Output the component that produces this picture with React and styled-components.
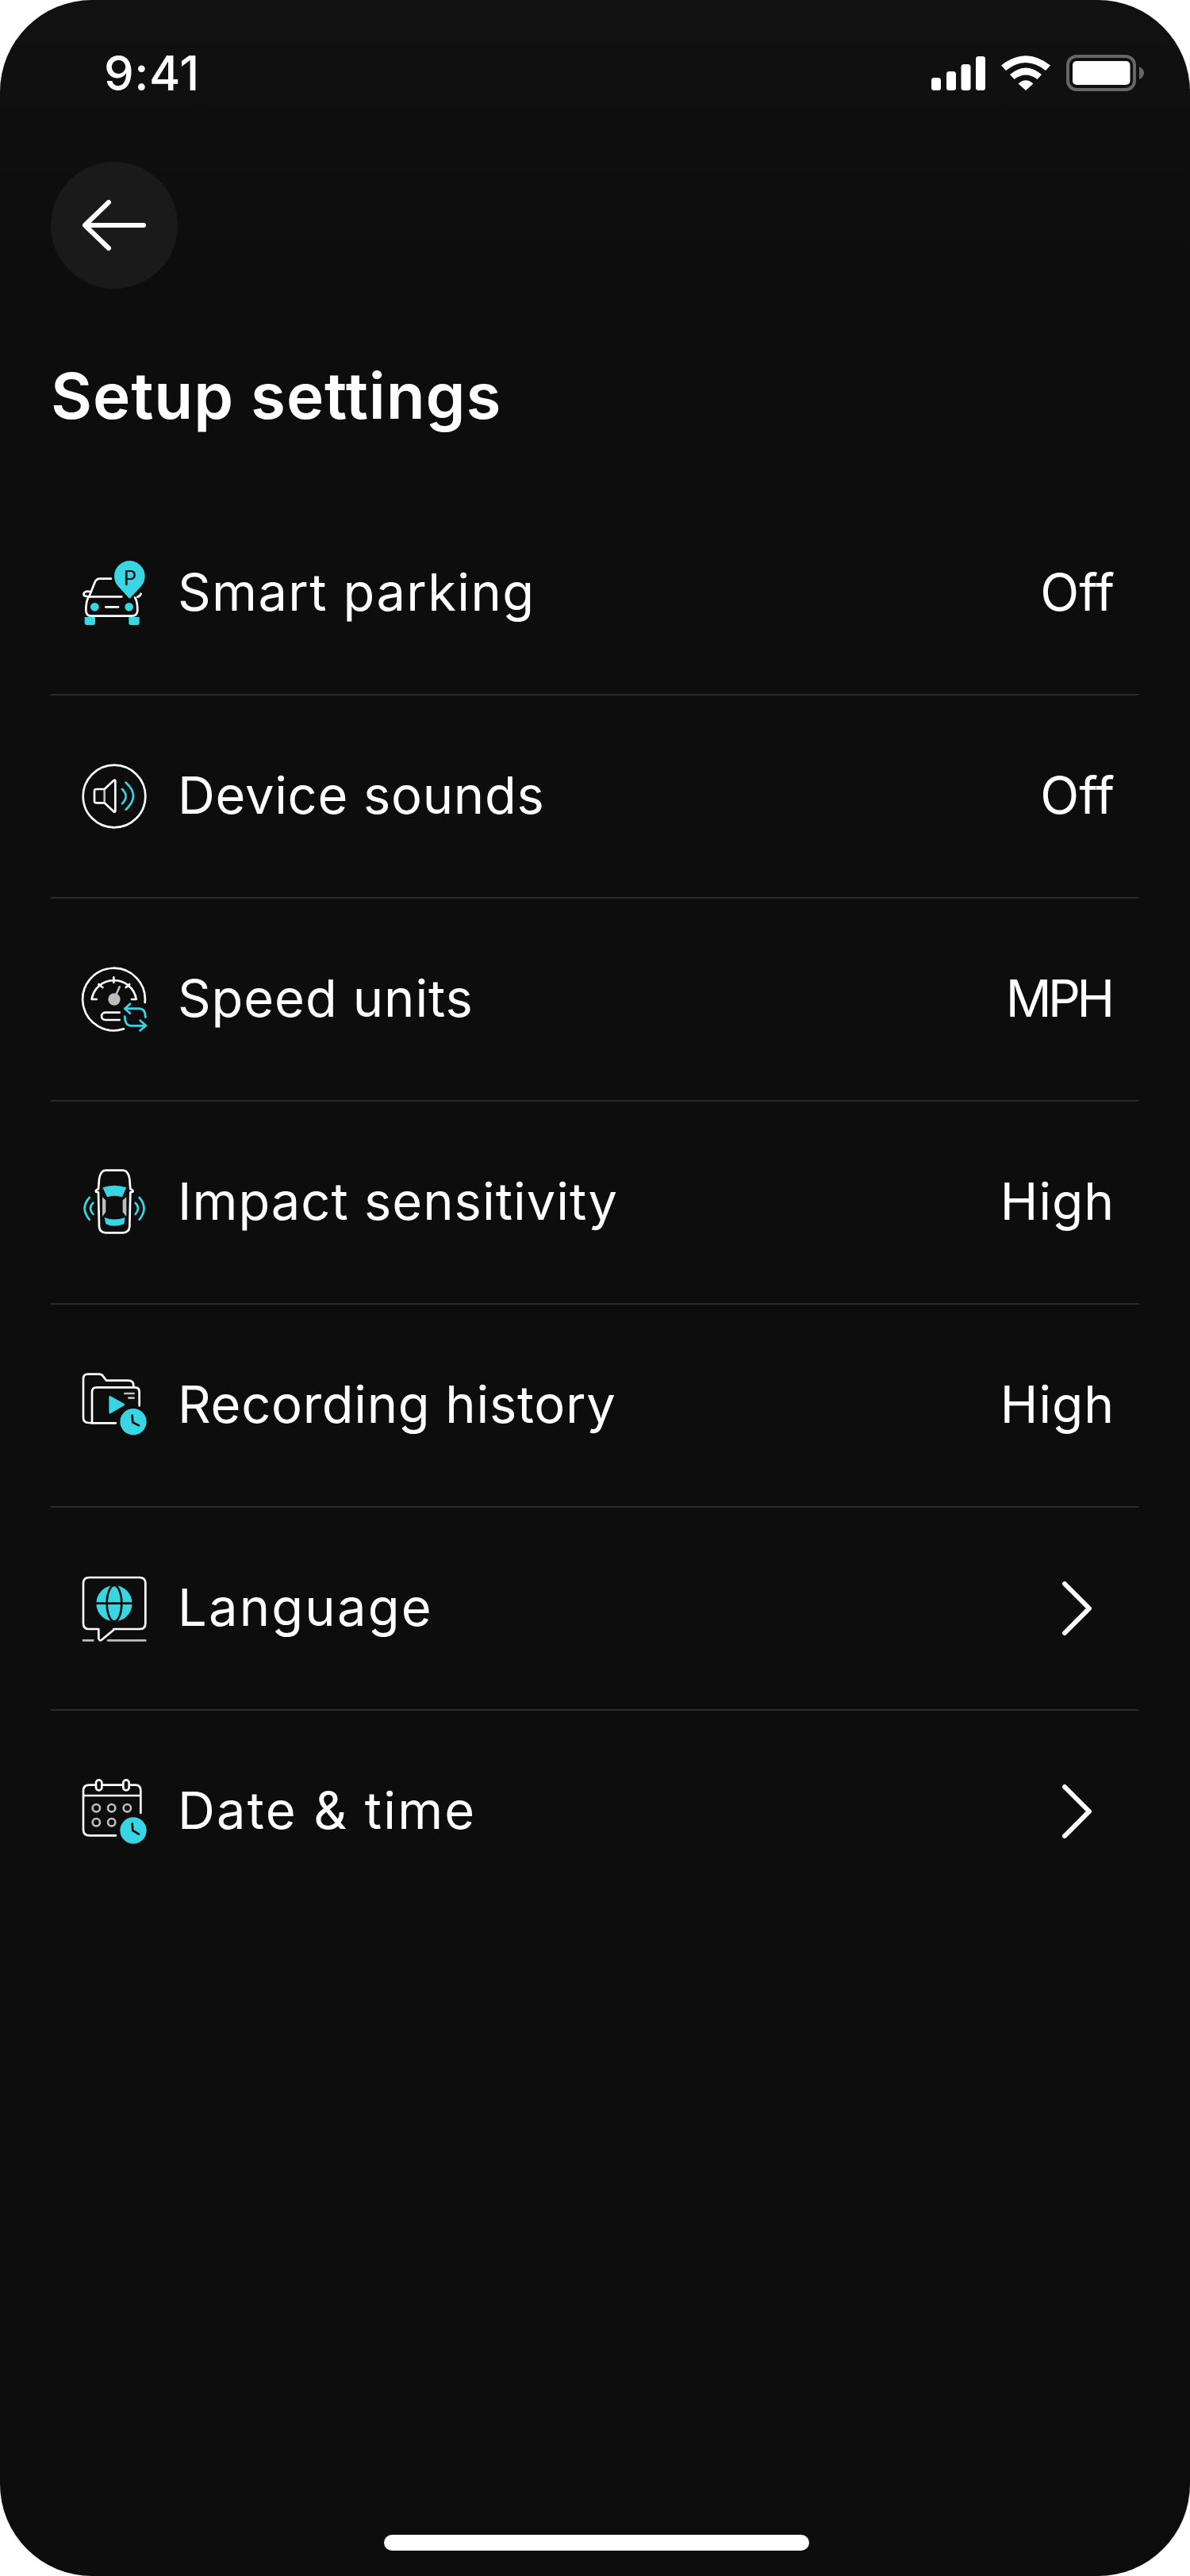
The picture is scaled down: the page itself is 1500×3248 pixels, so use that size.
import styled, { createGlobalStyle } from "styled-components";

const CYAN = "#38d6e2";
const DARK = "#0d0d0d";
const GREY = "#bdbdbd";

const GlobalStyle = createGlobalStyle`
  html, body {
    margin: 0;
    padding: 0;
    background: #fff;
  }
`;

const Screen = styled.div`
  width: 1500px;
  height: 3248px;
  display: flex;
  flex-direction: column;
  overflow: hidden;
  border-radius: 116px;
  background: linear-gradient(#111111 0, #0d0d0d 380px);
  color: #fff;
  font-family: "Inter", "Liberation Sans", sans-serif;
`;

const StatusBar = styled.div`
  height: 184px;
  display: flex;
  align-items: center;
  justify-content: space-between;
  padding: 0 58px 0 131px;
`;

const Clock = styled.span`
  font-size: 60px;
  font-weight: 500;
  letter-spacing: 0.5px;
`;

const StatusIcons = styled.div`
  display: flex;
  align-items: center;
  gap: 20px;
`;

const BackButton = styled.button`
  width: 160px;
  height: 160px;
  margin: 20px 0 0 64px;
  padding: 0;
  border: 0;
  border-radius: 50%;
  display: flex;
  align-items: center;
  justify-content: center;
  background: #1a1a1a;
`;

const Title = styled.h1`
  margin: 80px 0 0 64px;
  font-size: 80px;
  line-height: 110px;
  font-weight: 600;
  letter-spacing: 0.9px;
`;

const List = styled.div`
  margin: 67px 64px 0;
`;

const Row = styled.div`
  height: 256px;
  box-sizing: border-box;
  display: flex;
  align-items: center;
  padding: 0 31px 0 16px;
  border-bottom: 2px solid ${(p) => (p.$last ? "transparent" : "#2a2a2a")};
`;

const RowIcon = styled.svg`
  width: 130px;
  height: 110px;
  flex: none;
  margin-right: 14px;
`;

const Label = styled.span`
  flex: 1;
  padding-bottom: 4px;
  font-size: 65px;
  font-weight: 400;
  letter-spacing: ${(p) => p.$track}px;
`;

// negative tracking pulls the last glyph past the box, so pad it back in
const Value = styled.span`
  padding: 0 ${(p) => Math.max(0, -p.$track)}px 4px 0;
  font-size: 64px;
  font-weight: 400;
  letter-spacing: ${(p) => p.$track}px;
`;

const Chevron = styled.svg`
  width: 40px;
  height: 72px;
  margin-right: 27px;
`;

const HomeBar = styled.div`
  width: 536px;
  height: 20px;
  margin: auto auto 32px 484px;
  border-radius: 10px;
  background: #fff;
`;

const white = { fill: "none", stroke: "#fff", strokeWidth: 8, strokeLinecap: "round", strokeLinejoin: "round" };
const cyan = { ...white, stroke: CYAN };
const grey = { ...white, stroke: GREY };
const ink = { ...white, stroke: DARK };

const ParkingIcon = () => (
  <RowIcon viewBox="0 9 390 330">
    <path fill={CYAN} d="M250 195 L206 147 A58 58 0 1 1 294 147 Z" />
    <text x="228" y="143" fontSize="76" fontFamily="Inter" fill={DARK}>P</text>
    <path {...white} d="M180 119 H138 Q124 119 118 134 L97 187 M220 187 H95 Q85 205 85 238 Q85 260 105 260 H258 Q280 260 280 238 Q280 205 270 190 M97 186 Q78 188 76 178 Q78 164 100 168 M280 188 Q290 186 293 176" />
    <circle cx="118" cy="226" r="16" fill={CYAN} />
    <circle cx="248" cy="226" r="16" fill={CYAN} />
    <path {...white} d="M160 226 H207" />
    <path fill={CYAN} d="M80 264 H120 V285 Q120 295 110 295 H90 Q80 295 80 285 Z M247 264 H287 V285 Q287 295 277 295 H257 Q247 295 247 285 Z" />
  </RowIcon>
);

const SoundIcon = () => (
  <RowIcon viewBox="0 -3 390 330">
    <circle {...white} cx="192" cy="162" r="118" />
    <path {...white} d="M155 135 H125 Q117 135 117 143 V180 Q117 187 125 187 H155 L190 220 Q196 224 196 216 V106 Q196 98 190 102 Z" />
    <path {...grey} strokeLinecap="butt" d="M155 137 V185" />
    <path {...cyan} d="M222 135 Q250 162 222 190 M236 110 Q292 160 236 212" />
  </RowIcon>
);

const SpeedIcon = () => (
  <RowIcon viewBox="0 15 390 330">
    <path {...white} d="M308 192 A118 118 0 1 0 228 292" />
    <path {...white} d="M125 180 H107 A85 85 0 0 1 275 180 H258 M190 97 V116 M133 123 L148 135 M250 123 L236 135" />
    <circle cx="192" cy="180" r="23" fill={GREY} />
    <path {...grey} d="M198 165 L212 133" />
    <path {...white} d="M212 230 H158 A14 14 0 0 0 158 258 H212" />
    <path {...cyan} d="M252 197 L232 215 L252 233 M232 215 H285 Q310 215 310 248 M290 260 L312 280 L290 298 M312 280 H258 Q232 280 232 245" />
  </RowIcon>
);

const ImpactIcon = () => (
  <RowIcon viewBox="0 3 390 330">
    <path {...white} d="M160 47 H225 Q245 47 250 80 L253 118 Q265 122 262 128 L253 130 L250 260 Q248 283 225 283 H160 Q137 283 135 260 L132 130 L123 128 Q120 122 132 118 L135 80 Q140 47 160 47 Z" />
    <path fill={CYAN} d="M148 112 Q192 97 238 112 L222 148 Q192 138 165 148 Z M155 225 Q192 240 233 225 L229 250 Q192 265 160 250 Z" />
    <path fill={GREY} d="M147 148 L160 160 V205 L147 222 Z M238 148 L224 160 V205 L238 222 Z" />
    <path {...cyan} d="M98 150 Q62 190 98 233 M112 170 Q92 190 112 213 M287 150 Q322 190 287 233 M272 170 Q292 190 272 213" />
  </RowIcon>
);

const HistoryIcon = () => (
  <RowIcon viewBox="0 21 390 330">
    <path {...white} d="M108 252 H95 Q75 252 75 232 V85 Q75 68 92 68 H135 Q145 68 150 76 L162 92 H245 Q265 92 265 112" />
    <path {...white} d="M198 253 H105 M108 250 V135 Q108 118 125 118 H270 Q287 118 287 135 V187" />
    <path {...grey} d="M232 141 H266 M247 158 H266" />
    <path fill={CYAN} stroke={CYAN} strokeWidth="8" strokeLinejoin="round" d="M176 154 L227 183 L176 213 Z" />
    <circle cx="264" cy="248" r="50" fill={CYAN} />
    <path {...ink} d="M260 224 L262 250 L285 262" />
  </RowIcon>
);

const LanguageIcon = () => (
  <RowIcon viewBox="0 9 390 330">
    <path {...white} d="M190 252 H288 Q310 252 310 230 V79 Q310 57 288 57 H97 Q75 57 75 79 V230 Q75 252 97 252 H133 V288 Q136 300 146 292 L190 255" />
    <path {...grey} d="M75 295 H112 M168 295 H310" />
    <circle cx="192" cy="155" r="68" fill={CYAN} />
    <ellipse {...ink} cx="192" cy="155" rx="28" ry="68" />
    <path {...ink} strokeLinecap="butt" d="M122 155 H262" />
  </RowIcon>
);

const DateIcon = () => (
  <RowIcon viewBox="0 27 390 330">
    <path {...white} d="M198 283 H100 Q75 283 75 260 V113 Q75 92 98 92 H272 Q292 92 292 113 V198 M75 132 H292" />
    <rect {...white} fill={DARK} x="123" y="73" width="22" height="39" rx="11" />
    <rect {...white} fill={DARK} x="226" y="73" width="22" height="39" rx="11" />
    {[[124, 179], [182, 179], [241, 179], [124, 233], [182, 233]].map(([cx, cy]) => (
      <circle key={cx + "-" + cy} {...grey} cx={cx} cy={cy} r="14" />
    ))}
    <circle cx="264" cy="264" r="50" fill={CYAN} />
    <path {...ink} d="M260 238 L262 264 L285 278" />
  </RowIcon>
);

const SETTINGS = [
  { label: "Smart parking", track: 1.4, value: "Off", valueTrack: 0, Icon: ParkingIcon },
  { label: "Device sounds", track: 0.7, value: "Off", valueTrack: 0, Icon: SoundIcon },
  { label: "Speed units", track: 0.9, value: "MPH", valueTrack: -4.5, Icon: SpeedIcon },
  { label: "Impact sensitivity", track: 1, value: "High", valueTrack: 1, Icon: ImpactIcon },
  { label: "Recording history", track: 0.7, value: "High", valueTrack: 1, Icon: HistoryIcon },
  { label: "Language", track: 2.2, Icon: LanguageIcon },
  { label: "Date & time", track: 2.2, Icon: DateIcon },
];

export default function App() {
  return (
    <>
      <GlobalStyle />
      <Screen>
        <StatusBar>
          <Clock>9:41</Clock>
          <StatusIcons>
            <svg width="68" height="43" viewBox="0 0 68 43" fill="#fff">
              <rect x="0" y="27" width="12" height="16" rx="3.5" />
              <rect x="19" y="19" width="12" height="24" rx="3.5" />
              <rect x="37.500" y="10" width="12" height="33" rx="3.5" />
              <rect x="56" y="0" width="12" height="43" rx="3.5" />
            </svg>
            <svg width="62" height="44" viewBox="0 0 62 44" fill="#fff">
              <path d="M0 12.500 Q31 -12 62 12.500 L56 19 Q31 -1 6 19 Z" />
              <path d="M11 24 Q31 7 51 24 L45.500 30 Q31 19 16.500 30 Z" />
              <path d="M21.500 35.500 Q31 27 40.500 35.500 L31 44 Z" />
            </svg>
            <svg width="98" height="46" viewBox="0 0 98 46">
              <rect x="2" y="2" width="84" height="42" rx="11" fill="none" stroke="#666" strokeWidth="4" />
              <rect x="8" y="8" width="72.500" height="30" rx="5" fill="#fff" />
              <path d="M92 15 Q98 18 98 23 Q98 28 92 31 Z" fill="#666" />
            </svg>
          </StatusIcons>
        </StatusBar>

        <BackButton aria-label="Back">
          <svg width="80" height="64" viewBox="0 0 80 64" fill="none" stroke="#fff" strokeWidth="6" strokeLinecap="round" strokeLinejoin="round">
            <path d="M3 32 H77 M33 3 L3 32 L33 61" />
          </svg>
        </BackButton>

        <Title>Setup settings</Title>

        <List>
          {SETTINGS.map(({ label, track, value, valueTrack, Icon }, i) => (
            <Row key={label} $last={i === SETTINGS.length - 1}>
              <Icon />
              <Label $track={track}>{label}</Label>
              {value ? (
                <Value $track={valueTrack}>{value}</Value>
              ) : (
                <Chevron viewBox="0 0 40 72" fill="none" stroke="#fff" strokeWidth="6" strokeLinecap="round" strokeLinejoin="round">
                  <path d="M4 5 L35 36 L4 67" />
                </Chevron>
              )}
            </Row>
          ))}
        </List>

        <HomeBar />
      </Screen>
    </>
  );
}
